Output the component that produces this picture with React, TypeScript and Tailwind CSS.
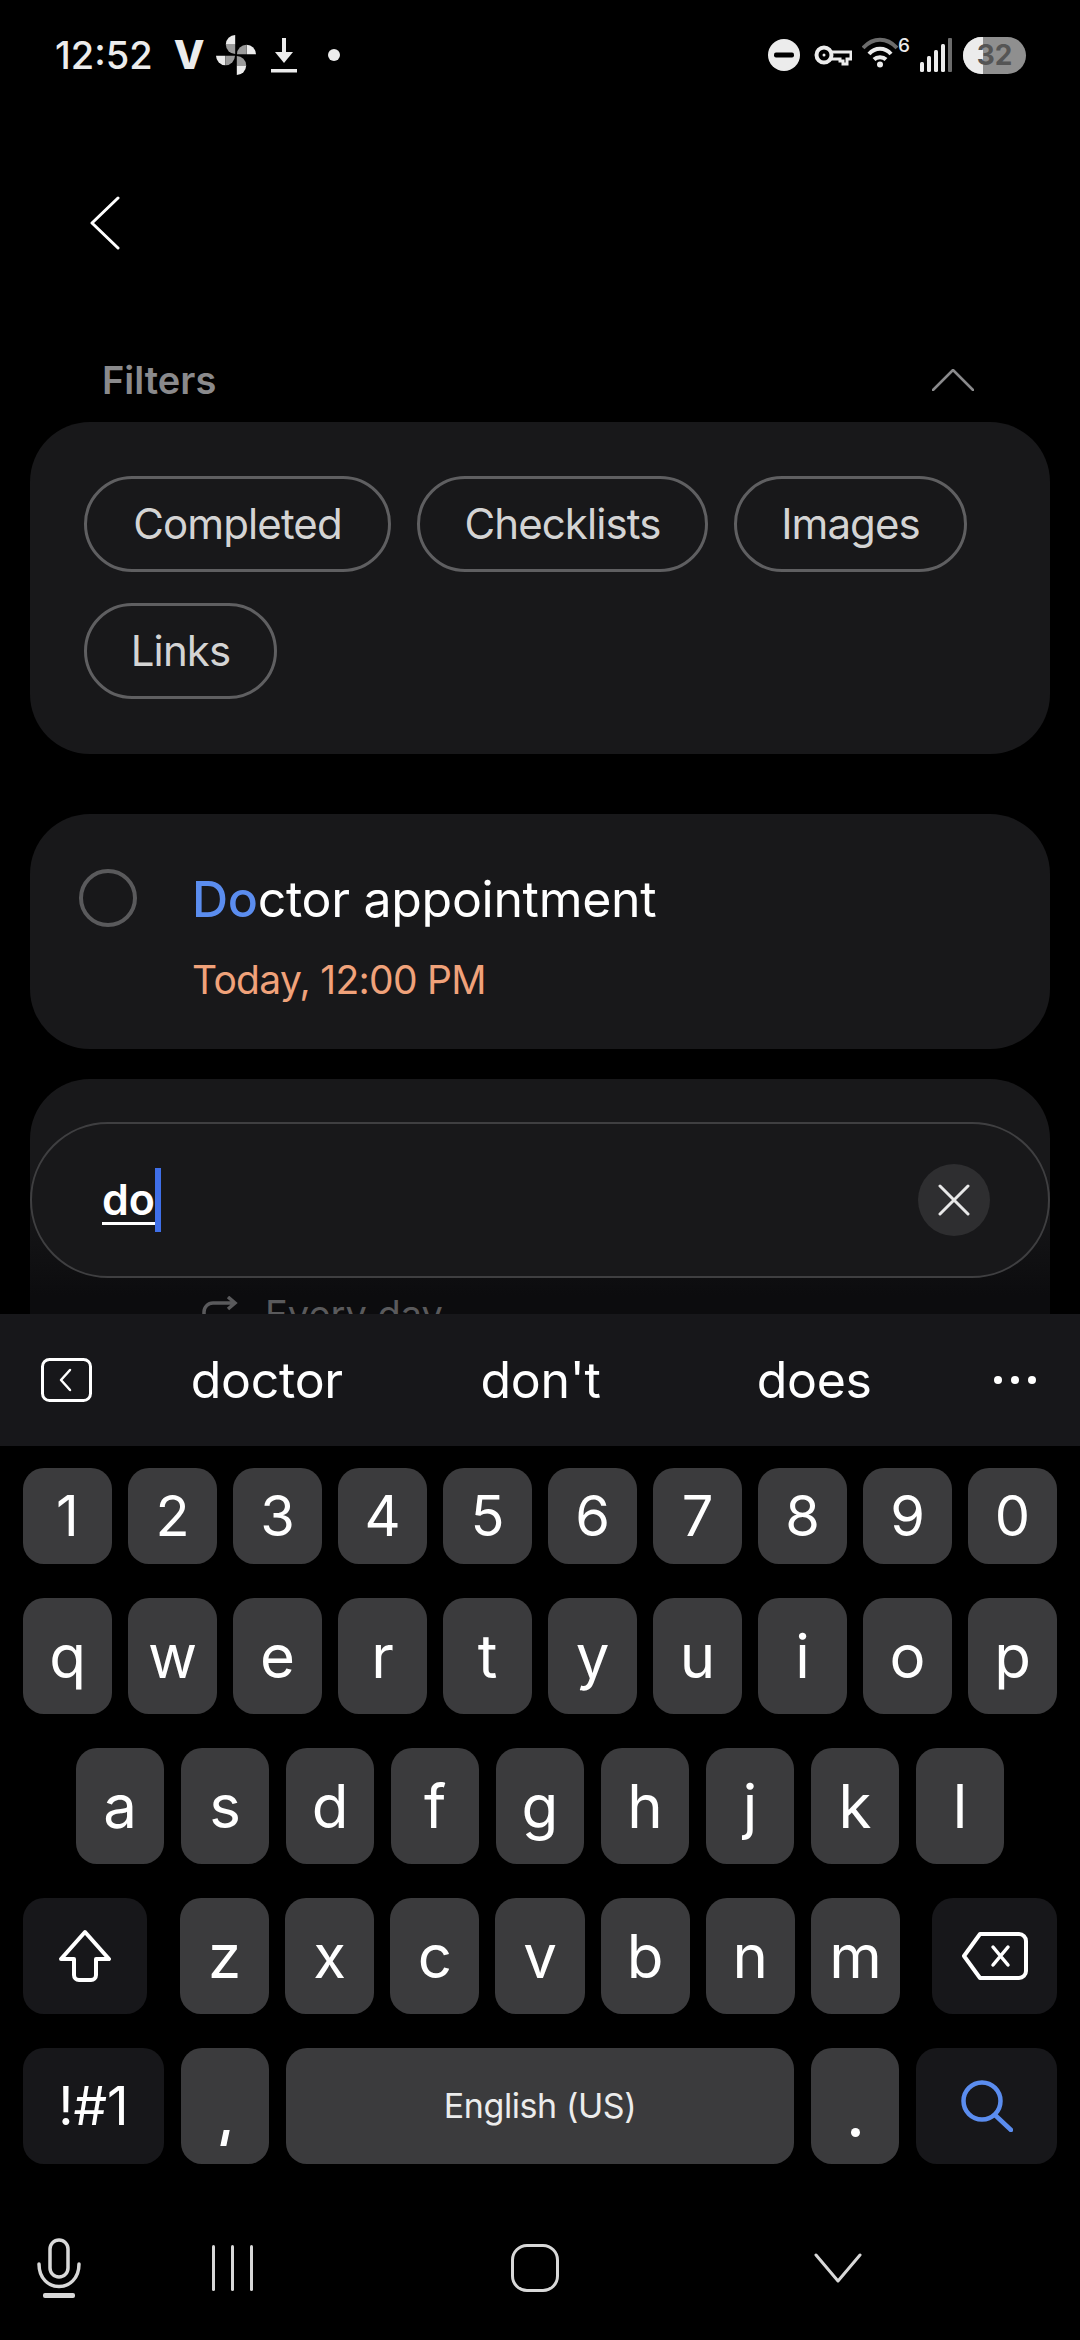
import React from "react";

const FONT = "font-['Inter','Noto_Sans',sans-serif]";

const filters = [
    {name: "Completed", width: "w-[307px]"},
    {name: "Checklists", width: "w-[291px]"},
    {name: "Images", width: "w-[233px]"},
    {name: "Links", width: "w-[193px]"},
];
const suggestions = ["doctor", "don't", "does"];
const rowNumbers = ["1", "2", "3", "4", "5", "6", "7", "8", "9", "0"];
const rowTop = ["q", "w", "e", "r", "t", "y", "u", "i", "o", "p"];
const rowMiddle = ["a", "s", "d", "f", "g", "h", "j", "k", "l"];
const rowBottom = ["z", "x", "c", "v", "b", "n", "m"];

const Pinwheel = () => (
    <svg width="40" height="40" viewBox="0 0 40 40" className="ml-[12px]">
        {[0, 90, 180, 270].map((angle) => (
            <g key={angle} transform={`rotate(${angle} 20 20)`}>
                <path d="M21 19.2 A9.6 9.6 0 0 1 30.4 9.8 L30.4 19.2 Z" fill="#9a9a9a" />
                <path d="M30.6 9.8 A9.6 9.6 0 0 1 40 19.2 L30.6 19.2 Z" fill="#ececec" />
            </g>
        ))}
    </svg>
);

const StatusBar = () => (
    <div className="flex h-[110px] items-center justify-between pl-[55px] pr-[54px]">
        <div className="flex items-center">
            <span className="text-[38px] leading-none font-medium text-[#ececec]">12:52</span>
            <span className="ml-[21px] text-[40px] leading-none font-extrabold text-[#ececec]">V</span>
            <Pinwheel />
            <svg width="28" height="36" viewBox="0 0 28 36" className="ml-[14px]">
                <path d="M14 1 V16" stroke="#ececec" strokeWidth="4" />
                <path d="M5 15 H23 L14 26 Z" fill="#ececec" />
                <rect x="1" y="32" width="26" height="3.5" fill="#ececec" />
            </svg>
            <span className="ml-[30px] h-[12px] w-[12px] rounded-full bg-[#ececec]" />
        </div>
        <div className="flex items-center">
            <svg width="32" height="32" viewBox="0 0 32 32">
                <circle cx="16" cy="16" r="16" fill="#ececec" />
                <rect x="6" y="13.5" width="20" height="5" rx="2" fill="#000" />
            </svg>
            <svg width="38" height="22" viewBox="0 0 38 22" className="ml-[14px]">
                <circle cx="10" cy="11" r="7.5" fill="none" stroke="#ececec" strokeWidth="4" />
                <circle cx="10" cy="11" r="1.5" fill="#ececec" />
                <path d="M17 8 H37 V15 H33 V20 H29 V17 H26 V15 H17" fill="none" stroke="#ececec" strokeWidth="3" />
            </svg>
            <div className="relative ml-[10px] h-[36px] w-[48px]">
                <svg width="36" height="32" viewBox="0 0 36 32" className="absolute top-[-1px] left-0">
                    <path d="M1 12 C11 1 25 1 35 12" fill="none" stroke="#6c6c6c" strokeWidth="4" />
                    <path d="M7 18 C13 11 23 11 29 18" fill="none" stroke="#ececec" strokeWidth="4" />
                    <path d="M12 23.5 C15 20.5 21 20.5 24 23.5" fill="none" stroke="#ececec" strokeWidth="4" />
                    <circle cx="18" cy="28.5" r="3" fill="#ececec" />
                </svg>
                <span className="absolute top-[-1px] right-0 text-[19px] leading-[20px] font-medium text-[#ececec]">6</span>
            </div>
            <svg width="33" height="34" viewBox="0 0 33 34" className="ml-[10px]">
                <rect x="0" y="24" width="4" height="10" rx="1.5" fill="#ececec" />
                <rect x="7" y="18" width="4" height="16" rx="1.5" fill="#ececec" />
                <rect x="14" y="12" width="4" height="22" rx="1.5" fill="#ececec" />
                <rect x="21" y="6" width="4" height="28" rx="1.5" fill="#ececec" />
                <rect x="28" y="0" width="4" height="34" rx="1" fill="#6c6c6c" />
            </svg>
            <div className="relative ml-[10px] flex h-[37px] w-[63px] items-center justify-center overflow-hidden rounded-full bg-[#8f8f8f]">
                <span className="absolute top-0 bottom-0 left-0 w-[20px] bg-[#ececec]" />
                <span className="relative text-[28px] leading-none font-bold text-[#555]">32</span>
            </div>
        </div>
    </div>
);

const Key = ({label, size}: {label: string; size: string}) => (
    <div className={`flex h-full flex-1 items-center justify-center rounded-[21px] bg-[#3b3b3d] leading-none text-white ${size}`}>
        {label}
    </div>
);

const Keyboard = () => (
    <div className="flex flex-col">
        {/* suggestion strip */}
        <div className="flex h-[132px] items-center bg-[#17171a] pl-[41px]">
            <svg width="51" height="44" viewBox="0 0 51 44" className="shrink-0">
                <rect x="1.5" y="1.5" width="48" height="41" rx="7" fill="none" stroke="#fff" strokeWidth="3" />
                <path d="M29 12 L20 22 L29 32" fill="none" stroke="#fff" strokeWidth="2.5" strokeLinecap="round" strokeLinejoin="round" />
            </svg>
            <div className="ml-[38px] grid w-[821px] shrink-0 grid-cols-3">
                {suggestions.map((word) => (
                    <span key={word} className="text-center text-[50px] leading-none tracking-[-0.3px] text-white">
                        {word}
                    </span>
                ))}
            </div>
            <div className="ml-[43px] flex gap-[9px]">
                <span className="h-[8px] w-[8px] rounded-full bg-white" />
                <span className="h-[8px] w-[8px] rounded-full bg-white" />
                <span className="h-[8px] w-[8px] rounded-full bg-white" />
            </div>
        </div>

        <div className="flex flex-col gap-[34px] pt-[22px]">
            <div className="flex h-[96px] gap-[16px] px-[23px]">
                {rowNumbers.map((k) => <Key key={k} label={k} size="text-[56px]" />)}
            </div>
            <div className="flex h-[116px] gap-[16px] px-[23px]">
                {rowTop.map((k) => <Key key={k} label={k} size="text-[60px]" />)}
            </div>
            <div className="flex h-[116px] gap-[17px] px-[76px]">
                {rowMiddle.map((k) => <Key key={k} label={k} size="text-[60px]" />)}
            </div>
            <div className="flex h-[116px] px-[23px]">
                <div className="flex w-[124px] items-center justify-center rounded-[21px] bg-[#17171a]">
                    <svg width="52" height="54" viewBox="0 0 52 54">
                        <path
                            d="M26 3 L50 30 H37 V46 A5 5 0 0 1 32 51 H20 A5 5 0 0 1 15 46 V30 H2 Z"
                            fill="none"
                            stroke="#fff"
                            strokeWidth="4"
                            strokeLinejoin="round"
                        />
                    </svg>
                </div>
                <div className="ml-[33px] flex w-[720px] gap-[16px]">
                    {rowBottom.map((k) => <Key key={k} label={k} size="text-[60px]" />)}
                </div>
                <div className="ml-[32px] flex w-[125px] items-center justify-center rounded-[21px] bg-[#17171a]">
                    <svg width="67" height="48" viewBox="0 0 67 48">
                        <path
                            d="M19 2 H58 A7 7 0 0 1 65 9 V39 A7 7 0 0 1 58 46 H19 L3 24 Z"
                            fill="none"
                            stroke="#fff"
                            strokeWidth="4"
                            strokeLinejoin="round"
                        />
                        <path d="M32 15 L47 33 M47 15 L32 33" stroke="#fff" strokeWidth="3.5" strokeLinecap="round" />
                    </svg>
                </div>
            </div>
            <div className="flex h-[116px] px-[23px]">
                <div className="flex w-[141px] items-center justify-center rounded-[21px] bg-[#17171a] text-[53px] leading-none text-white">!#1</div>
                <div className="ml-[17px] flex w-[88px] items-end justify-center rounded-[21px] bg-[#3b3b3d] pb-[18px]">
                    <span className="h-[16px] w-[6px] skew-x-[-12deg] bg-white" />
                </div>
                <div className="ml-[17px] flex w-[508px] items-center justify-center rounded-[21px] bg-[#3b3b3d] text-[34px] leading-none tracking-[-0.4px] text-[#ececec]">
                    English (US)
                </div>
                <div className="ml-[17px] flex w-[88px] items-end justify-center rounded-[21px] bg-[#3b3b3d] pb-[27px]">
                    <span className="h-[9px] w-[9px] rounded-full bg-white" />
                </div>
                <div className="ml-[17px] flex w-[141px] items-center justify-center rounded-[21px] bg-[#17171a]">
                    <svg width="52" height="52" viewBox="0 0 52 52">
                        <circle cx="21" cy="21" r="18.5" fill="none" stroke="#5b8def" strokeWidth="4.5" />
                        <path d="M34 35 L50 50" stroke="#5b8def" strokeWidth="4.5" strokeLinecap="round" />
                    </svg>
                </div>
            </div>
        </div>

        {/* navigation bar */}
        <div className="flex h-[176px] items-center pt-[32px] pl-[37px]">
            <svg width="44" height="60" viewBox="0 0 44 60">
                <rect x="13" y="2" width="18" height="37" rx="9" fill="none" stroke="#d8d8d8" strokeWidth="3.5" />
                <path d="M2 26 C2 56 42 56 42 26" fill="none" stroke="#d8d8d8" strokeWidth="3.5" strokeLinecap="round" />
                <rect x="6" y="55" width="32" height="5" rx="2" fill="#d8d8d8" />
            </svg>
            <div className="ml-[131px] flex h-[46px] w-[41px] justify-between">
                <span className="w-[3px] rounded-full bg-[#d8d8d8]" />
                <span className="w-[3px] rounded-full bg-[#d8d8d8]" />
                <span className="w-[3px] rounded-full bg-[#d8d8d8]" />
            </div>
            <div className="ml-[258px] h-[48px] w-[48px] rounded-[16px] border-[3.5px] border-[#d8d8d8]" />
            <svg width="48" height="30" viewBox="0 0 48 30" className="ml-[255px]">
                <path d="M2 2 L24 28 L46 2" fill="none" stroke="#d8d8d8" strokeWidth="3" strokeLinecap="round" strokeLinejoin="round" />
            </svg>
        </div>
    </div>
);

export default function App() {
    return (
        <div className={`flex h-[2340px] w-[1080px] flex-col overflow-hidden bg-black ${FONT}`}>
            <div className="relative h-[1314px] shrink-0 overflow-hidden">
                <StatusBar />

                <div className="h-[118px] pt-[86px] pl-[90px]">
                    <svg width="30" height="54" viewBox="0 0 30 54">
                        <path d="M28 2 L2 27 L28 52" fill="none" stroke="#fff" strokeWidth="3" strokeLinecap="round" strokeLinejoin="round" />
                    </svg>
                </div>

                <div className="mt-[110px] flex h-[84px] items-center justify-between pr-[106px] pl-[102px]">
                    <span className="text-[38px] leading-none font-semibold text-[#8a8a8c]">Filters</span>
                    <svg width="42" height="22" viewBox="0 0 42 22">
                        <path d="M1 21 L21 1 L41 21" fill="none" stroke="#8a8a8c" strokeWidth="2.5" strokeLinecap="round" strokeLinejoin="round" />
                    </svg>
                </div>

                <div className="flex flex-col gap-[30px] px-[30px]">
                    <div className="mb-[30px] flex flex-wrap gap-x-[26px] gap-y-[31px] rounded-[60px] bg-[#18181a] p-[54px] pb-[55px]">
                        {filters.map((f) => (
                            <div key={f.name} className={`flex h-[96px] items-center justify-center rounded-full border-[3px] border-[#5f5f61] text-[42px] leading-none tracking-[-0.9px] text-[#d4d4d4] ${f.width}`}>
                                {f.name}
                            </div>
                        ))}
                    </div>

                    <div className="flex h-[235px] rounded-[60px] bg-[#18181a] pt-[55px] pl-[49px]">
                        <span className="h-[58px] w-[58px] shrink-0 rounded-full border-4 border-[#5a5a5c]" />
                        <div className="mt-px ml-[55px]">
                            <div className="text-[50px] leading-[58px] tracking-[-0.3px] text-white">
                                <span className="font-medium text-[#5b8def]">Do</span>ctor appointment
                            </div>
                            <div className="mt-[29px] text-[39px] leading-[46px] tracking-[-0.7px] text-[#f0a27a]">Today, 12:00 PM</div>
                        </div>
                    </div>

                    {/* next task, dimmed towards the keyboard */}
                    <div className="h-[240px] rounded-t-[60px] bg-[linear-gradient(#18181a_47%,#0c0c0e_90%)] pt-[212px] pl-[172px]">
                        <div className="flex items-center gap-[27px] text-[38px] leading-[46px] text-[#5a5a5c]">
                            <svg width="36" height="36" viewBox="0 0 36 36">
                                <path d="M2 30 V16 A9 9 0 0 1 11 7 H33 M26 1 L33 7 L26 13 M33 22 V30" fill="none" stroke="#5a5a5c" strokeWidth="3.5" />
                            </svg>
                            Every day
                        </div>
                    </div>
                </div>

                {/* search field floats over the list */}
                <div className="absolute top-[1122px] right-[30px] left-[30px] flex h-[156px] items-center justify-between rounded-full border-2 border-[#3f3f41] bg-[#18181a] pr-[58px] pl-[70px]">
                    <div className="flex h-[64px] items-center">
                        <span className="border-b-[3px] border-white text-[43px] leading-[46px] font-semibold text-white">do</span>
                        <span className="h-[64px] w-[6px] bg-[#3f6fe8]" />
                    </div>
                    <div className="flex h-[72px] w-[72px] items-center justify-center rounded-full bg-[#2e2e30]">
                        <svg width="32" height="32" viewBox="0 0 32 32">
                            <path d="M2 2 L30 30 M30 2 L2 30" stroke="#e8e8e8" strokeWidth="3" strokeLinecap="round" />
                        </svg>
                    </div>
                </div>
            </div>

            <Keyboard />
        </div>
    );
}
